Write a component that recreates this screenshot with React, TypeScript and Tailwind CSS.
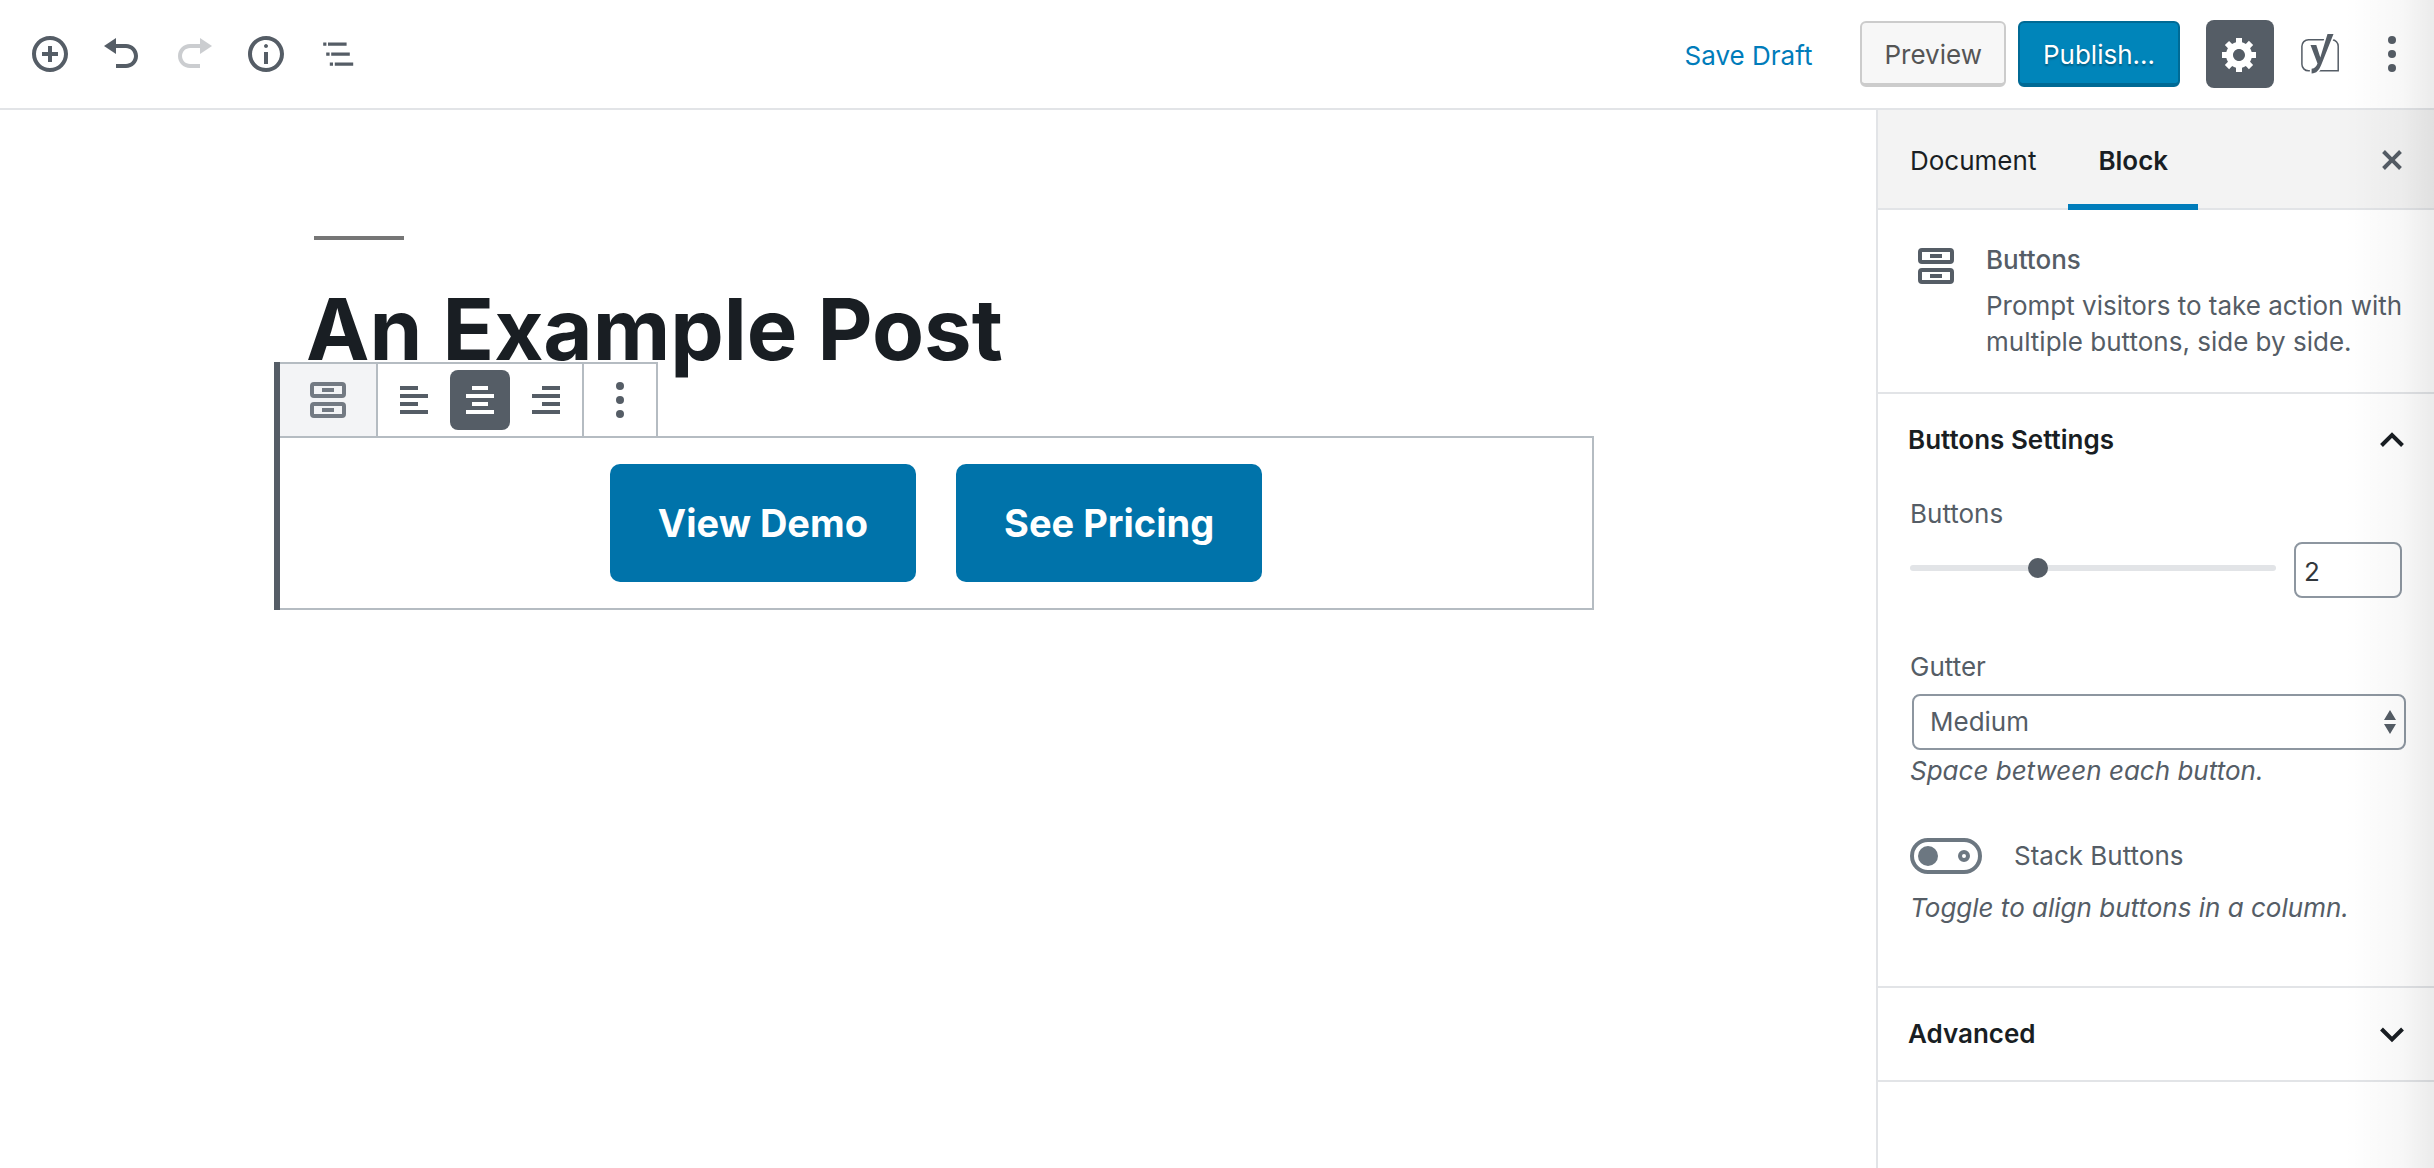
import React, { useState } from "react";

type IconProps = { className?: string };

function Dashicon({ d, className = "" }: { d: string; className?: string }) {
  return (
    <svg viewBox="0 0 20 20" className={`size-10 fill-current ${className}`} aria-hidden="true">
      <path d={d} />
    </svg>
  );
}

const paths = {
  insert:
    "M10 1c-5 0-9 4-9 9s4 9 9 9 9-4 9-9-4-9-9-9zm0 16c-3.9 0-7-3.1-7-7s3.1-7 7-7 7 3.1 7 7-3.1 7-7 7zm1-11H9v3H6v2h3v3h2v-3h3V9h-3V6z",
  undo: "M12 5H7V2L1 6l6 4V7h5c2.2 0 4 1.8 4 4s-1.8 4-4 4H7v2h5c3.3 0 6-2.7 6-6s-2.7-6-6-6z",
  redo: "M8 5h5V2l6 4-6 4V7H8c-2.2 0-4 1.8-4 4s1.8 4 4 4h5v2H8c-3.3 0-6-2.7-6-6s2.7-6 6-6z",
  info: "M9 15h2V9H9v6zm1-10c-.5 0-1 .5-1 1s.5 1 1 1 1-.5 1-1-.5-1-1-1zm0-4c-5 0-9 4-9 9s4 9 9 9 9-4 9-9-4-9-9-9zm0 16c-3.9 0-7-3.1-7-7s3.1-7 7-7 7 3.1 7 7-3.1 7-7 7z",
  outline:
    "M2.6 4.2h1.6v1.7H2.6zM5 4.2h9.3v1.7H5zM4.1 9.2h1.7v1.7H4.1zM6.6 9.2h9.3v1.7H6.6zM5.9 14.2h1.6v1.7H5.9zM8.4 14.2h9.2v1.7H8.4z",
  gear: "M18 12h-2.18c-.17.7-.44 1.35-.81 1.93l1.54 1.54-2.1 2.1-1.54-1.54c-.58.36-1.23.63-1.91.79V19H8v-2.18c-.68-.16-1.33-.43-1.91-.79l-1.54 1.54-2.12-2.12 1.54-1.54c-.36-.58-.63-1.23-.79-1.91H1V9.03h2.17c.16-.7.44-1.35.8-1.94L2.43 5.55l2.1-2.1 1.54 1.54c.58-.37 1.24-.64 1.93-.81V2h3v2.18c.68.16 1.33.43 1.91.79l1.54-1.54 2.12 2.12-1.54 1.54c.36.59.64 1.24.8 1.94H18V12zm-8.5 1.5c1.66 0 3-1.34 3-3s-1.34-3-3-3-3 1.34-3 3 1.34 3 3 3z",
  alignLeft: "M12 5V3H3v2h9zm5 4V7H3v2h14zm-5 4v-2H3v2h9zm5 4v-2H3v2h14z",
  alignCenter: "M14 5V3H6v2h8zm3 4V7H3v2h14zm-3 4v-2H6v2h8zm3 4v-2H3v2h14z",
  alignRight: "M17 5V3H8v2h9zm0 4V7H3v2h14zm0 4v-2H8v2h9zm0 4v-2H3v2h14z",
  close:
    "M14.95 6.46L11.41 10l3.54 3.54-1.41 1.41L10 11.42l-3.53 3.53-1.42-1.42L8.58 10 5.05 6.47l1.42-1.42L10 8.58l3.54-3.53z",
};

function DotsIcon() {
  return (
    <svg viewBox="0 0 40 40" className="size-10 fill-current" aria-hidden="true">
      <circle cx="20" cy="6" r="4" />
      <circle cx="20" cy="20" r="4" />
      <circle cx="20" cy="34" r="4" />
    </svg>
  );
}

function ButtonsIcon({ className = "" }: IconProps) {
  return (
    <svg viewBox="0 0 40 40" className={`size-10 shrink-0 ${className}`} aria-hidden="true">
      <g fill="none" stroke="currentColor" strokeWidth="4">
        <rect x="4" y="4" width="32" height="12" rx="2" />
        <rect x="4" y="24" width="32" height="12" rx="2" />
      </g>
      <path fill="currentColor" d="M14 8h12v4H14zM14 28h12v4H14z" />
    </svg>
  );
}

function YoastIcon() {
  const stem =
    "M26.5 0h6L20.6 30c-2.6 6.6-5 9.2-10 9.6v-4.8c3.3-.5 4.8-2.2 5.9-5.3L9.5 11h5.8l4 12.4z";
  return (
    <svg viewBox="0 0 38 40" className="h-10 w-[38px]" aria-hidden="true">
      <path
        d="M7.5 5.7H31c3.6 0 6.2 3 6.2 6.5v24.6H7.5c-3.7 0-6.6-3-6.6-6.6V12.3c0-3.6 2.9-6.6 6.6-6.6z"
        fill="none"
        stroke="currentColor"
        strokeWidth="1.5"
      />
      <path d={stem} fill="currentColor" stroke="#fff" strokeWidth="3.5" paintOrder="stroke" />
    </svg>
  );
}

function Chevron({ up = false }: { up?: boolean }) {
  return (
    <svg viewBox="0 0 40 40" className="size-10" fill="none" stroke="currentColor" strokeWidth="4" aria-hidden="true">
      <path d={up ? "M9.5 25.5L20 15l10.5 10.5" : "M9.5 15L20 25.5 30.5 15"} />
    </svg>
  );
}

function TopButton({ label, children, disabled }: { label: string; children: React.ReactNode; disabled?: boolean }) {
  return (
    <button
      type="button"
      aria-label={label}
      disabled={disabled}
      className="flex h-[68px] w-[72px] items-center justify-center disabled:opacity-30"
    >
      {children}
    </button>
  );
}

function Header() {
  return (
    <header className="flex h-[110px] items-center justify-between border-b-2 border-[#e2e4e7] pr-1.5 pl-3.5">
      <div className="flex items-center">
        <TopButton label="Add block"><Dashicon d={paths.insert} /></TopButton>
        <TopButton label="Undo"><Dashicon d={paths.undo} /></TopButton>
        <TopButton label="Redo" disabled><Dashicon d={paths.redo} /></TopButton>
        <TopButton label="Content structure"><Dashicon d={paths.info} /></TopButton>
        <TopButton label="Block navigation"><Dashicon d={paths.outline} /></TopButton>
      </div>
      <div className="flex items-center">
        <button type="button" className="mr-12 pt-1 text-[26px] leading-9 text-[#007cba]">Save Draft</button>
        <button
          type="button"
          className="mr-3 h-[66px] rounded-md border-2 border-b-4 border-[#ccc] bg-[#f7f7f7] px-[22px] pt-1 text-[26px] leading-9 text-[#555]"
        >
          Preview
        </button>
        <button
          type="button"
          className="mr-[26px] h-[66px] rounded-md border-2 border-b-4 border-[#006a95] bg-[#0085ba] px-[23px] pt-1 text-[26px] leading-9 text-white [text-shadow:0_2px_2px_#005d82]"
        >
          Publish…
        </button>
        <button
          type="button"
          aria-label="Settings"
          aria-pressed="true"
          className="mr-[27px] flex size-[68px] items-center justify-center rounded-lg bg-[#555d66] text-white"
        >
          <Dashicon d={paths.gear} />
        </button>
        <button type="button" aria-label="Yoast SEO" className="mr-[17px]"><YoastIcon /></button>
        <TopButton label="More tools"><DotsIcon /></TopButton>
      </div>
    </header>
  );
}

const alignments = [
  { id: "left", label: "Align left", d: paths.alignLeft },
  { id: "center", label: "Align center", d: paths.alignCenter },
  { id: "right", label: "Align right", d: paths.alignRight },
];

function BlockToolbar({ align, onAlign }: { align: string; onAlign: (a: string) => void }) {
  return (
    <div
      role="toolbar"
      aria-label="Block tools"
      className="flex h-[74px] w-fit divide-x-2 divide-[#b5bcc2] border-t-2 border-r-2 border-[#b5bcc2] bg-white"
    >
      <button
        type="button"
        aria-label="Change block type"
        className="flex w-[98px] items-center justify-center bg-[#f3f4f6] text-[#737a83]"
      >
        <ButtonsIcon />
      </button>
      <div className="flex items-center gap-1.5 px-1.5">
        {alignments.map((a) => (
          <button
            key={a.id}
            type="button"
            aria-label={a.label}
            aria-pressed={align === a.id}
            onClick={() => onAlign(a.id)}
            className="flex size-[60px] items-center justify-center rounded-lg aria-pressed:bg-[#555d66] aria-pressed:text-white"
          >
            <Dashicon d={a.d} />
          </button>
        ))}
      </div>
      <button type="button" aria-label="More options" className="flex w-[72px] items-center justify-center">
        <DotsIcon />
      </button>
    </div>
  );
}

function Editor() {
  const [align, setAlign] = useState("center");
  return (
    <main className="flex min-w-0 flex-1 justify-center pt-[126px] pr-2">
      <div className="w-full max-w-[1320px]">
        <div className="ml-10 h-1 w-[90px] bg-[#767676]" />
        <h1 className="mt-[34px] ml-8 text-[85px] leading-[112px] font-bold text-[#191e23]">An Example Post</h1>
        <section aria-label="Block: Buttons" className="relative z-10 -mt-6 border-l-[6px] border-[#555d66]">
          <BlockToolbar align={align} onAlign={setAlign} />
          <div className="flex justify-center gap-10 border-2 border-l-0 border-[#b5bcc2] py-[26px]">
            <a href="#demo" className="rounded-[10px] bg-[#0073aa] px-12 text-[38px] leading-[118px] font-bold text-white">
              View Demo
            </a>
            <a href="#pricing" className="rounded-[10px] bg-[#0073aa] px-12 text-[38px] leading-[118px] font-bold text-white">
              See Pricing
            </a>
          </div>
        </section>
      </div>
    </main>
  );
}

function Sidebar() {
  const [count, setCount] = useState(2);
  const [open, setOpen] = useState(true);
  const [stacked, setStacked] = useState(false);
  return (
    <aside className="w-[558px] shrink-0 border-l-2 border-[#e2e4e7] text-[26px] leading-9">
      <div className="flex h-[100px] border-b-2 border-[#e2e4e7] bg-[#f3f3f3] text-[#191e23]">
        <button type="button" className="px-8 pt-1">Document</button>
        <button type="button" className="-mb-0.5 border-b-[6px] border-[#007cba] px-[30px] pt-2 font-semibold">
          Block
        </button>
        <button type="button" aria-label="Close settings" className="mr-[22px] ml-auto pt-0.5 text-[#555d66]">
          <Dashicon d={paths.close} />
        </button>
      </div>

      <section className="flex h-[184px] items-start border-b-2 border-[#e2e4e7] pt-8 pr-7 pl-[38px]">
        <ButtonsIcon className="mt-1 mr-[30px]" />
        <div>
          <h2 className="mb-2.5 font-medium">Buttons</h2>
          <p>Prompt visitors to take action with multiple buttons, side by side.</p>
        </div>
      </section>

      <section className="border-b-2 border-[#e2e4e7]">
        <h2>
          <button
            type="button"
            aria-expanded={open}
            onClick={() => setOpen(!open)}
            className="flex h-[92px] w-full items-center justify-between pr-[22px] pl-[30px] font-semibold text-[#191e23]"
          >
            Buttons Settings
            <Chevron up={open} />
          </button>
        </h2>
        {open && (
          <div className="pr-7 pb-[60px] pl-8">
            <label htmlFor="count" className="mt-2.5 block">Buttons</label>
            <div className="mt-2.5 flex items-start gap-[18px] pr-1">
              <input
                id="count"
                type="range"
                min={1}
                max={4}
                value={count}
                onChange={(e) => setCount(Number(e.target.value))}
                className="mt-2 h-9 min-w-0 flex-1 appearance-none bg-transparent [&::-webkit-slider-runnable-track]:h-1.5 [&::-webkit-slider-runnable-track]:rounded-full [&::-webkit-slider-runnable-track]:bg-[#e2e4e7] [&::-webkit-slider-thumb]:-mt-[15px] [&::-webkit-slider-thumb]:size-9 [&::-webkit-slider-thumb]:appearance-none [&::-webkit-slider-thumb]:rounded-full [&::-webkit-slider-thumb]:border-8 [&::-webkit-slider-thumb]:border-transparent [&::-webkit-slider-thumb]:bg-[#555d66] [&::-webkit-slider-thumb]:bg-clip-padding"
              />
              <input
                type="number"
                aria-label="Buttons"
                min={1}
                max={4}
                value={count}
                onChange={(e) => setCount(Number(e.target.value))}
                className="h-14 w-[108px] appearance-none rounded-lg border-2 border-[#8d96a0] bg-transparent px-2 pt-0.5 text-[#32373c] [&::-webkit-inner-spin-button]:appearance-none"
              />
            </div>

            <label htmlFor="gutter" className="mt-[51px] block">Gutter</label>
            <div className="relative mt-[9px] ml-0.5">
              <select
                id="gutter"
                defaultValue="Medium"
                className="h-14 w-full appearance-none rounded-lg border-2 border-[#8d96a0] bg-transparent px-4"
              >
                <option>Small</option>
                <option>Medium</option>
                <option>Large</option>
              </select>
              <svg viewBox="0 0 12 24" className="pointer-events-none absolute top-4 right-2.5 h-6 w-3 fill-current" aria-hidden="true">
                <path d="M6 0l6 10H0zM6 24l6-10H0z" />
              </svg>
            </div>
            <p className="mt-[3px] italic">Space between each button.</p>

            <div className="mt-[49px] flex items-center gap-8">
              <input
                id="stack"
                type="checkbox"
                role="switch"
                checked={stacked}
                onChange={(e) => setStacked(e.target.checked)}
                className="flex h-9 w-[72px] appearance-none items-center justify-between rounded-full border-4 border-[#6c7781] pr-2 pl-1 before:size-5 before:rounded-full before:bg-[#6c7781] after:size-3 after:rounded-full after:border-4 after:border-[#6c7781] checked:flex-row-reverse"
              />
              <label htmlFor="stack">Stack Buttons</label>
            </div>
            <p className="mt-4 italic">Toggle to align buttons in a column.</p>
          </div>
        )}
      </section>

      <section className="border-b-2 border-[#e2e4e7]">
        <h2>
          <button
            type="button"
            aria-expanded="false"
            className="flex h-[92px] w-full items-center justify-between pr-[22px] pl-[30px] font-semibold text-[#191e23]"
          >
            Advanced
            <Chevron />
          </button>
        </h2>
      </section>
    </aside>
  );
}

export default function App() {
  return (
    <div className="relative flex min-h-screen flex-col bg-white font-['Inter',sans-serif] text-[#555d66]">
      <Header />
      <div className="flex flex-1">
        <Editor />
        <Sidebar />
      </div>
      <div className="pointer-events-none absolute inset-y-0 right-0 z-20 w-[90px] bg-[linear-gradient(to_right,rgba(0,0,0,0),rgba(0,0,0,0.01)_25%,rgba(0,0,0,0.03)_65%,rgba(0,0,0,0.08))]" />
    </div>
  );
}
